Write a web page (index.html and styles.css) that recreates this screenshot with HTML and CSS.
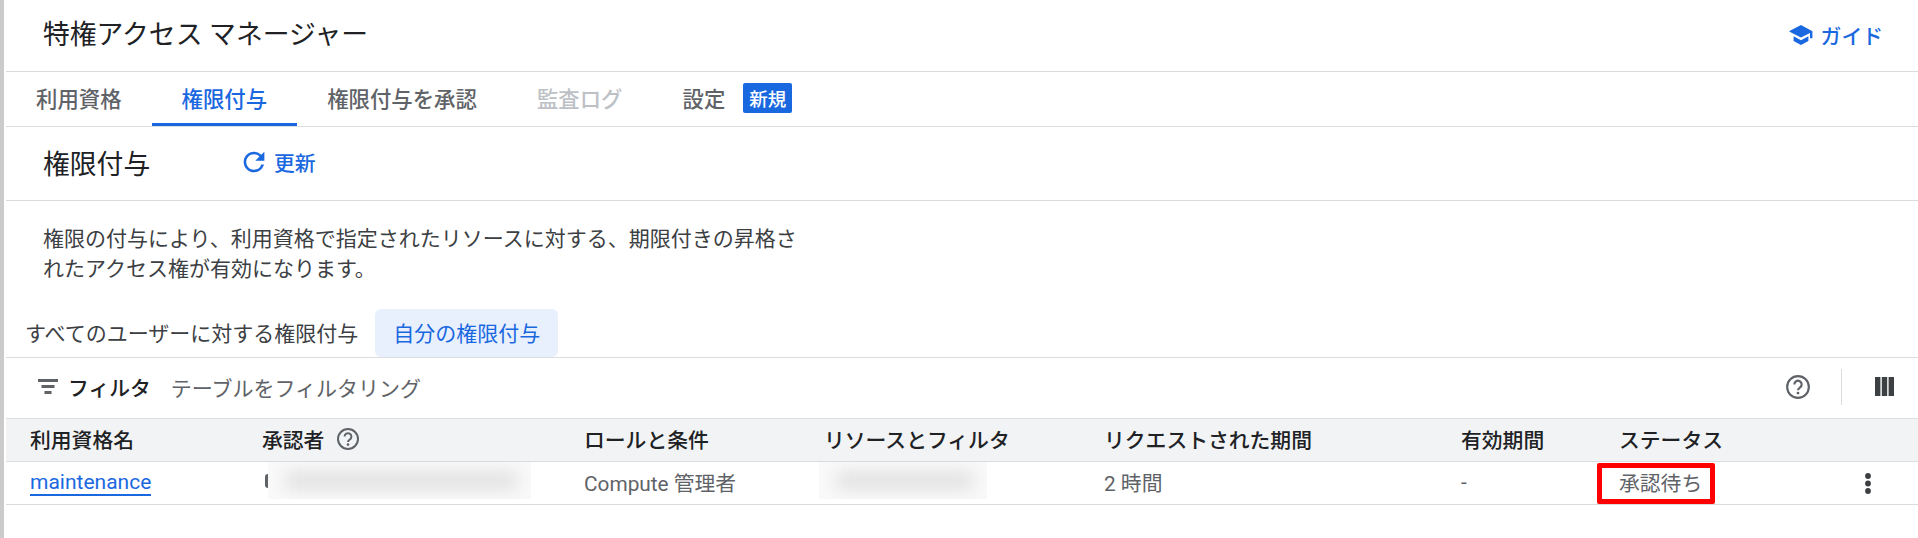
FILE: index.html
```html
<!DOCTYPE html>
<html lang="ja">
<head>
<meta charset="utf-8">
<title>特権アクセス マネージャー</title>
<link rel="stylesheet" href="styles.css">
</head>
<body>
<div class="page">
  <header class="topbar">
    <h1 class="app-title">特権アクセス マネージャー</h1>
    <a class="guide">
      <svg class="guide-icon" viewBox="0 0 24 20"><path fill="#1a68e0" d="M12 0 0 6.3l3 1.6v0L12 12.6l9-4.7v5.4h2.4V6.3z"/><path fill="#1a68e0" d="M4.6 11.3v4.6L12 20l7.4-4.1v-4.6L12 15.2z"/></svg>
      <span>ガイド</span>
    </a>
  </header>
  <nav class="tabs">
    <a class="tab">利用資格</a>
    <a class="tab active">権限付与</a>
    <a class="tab">権限付与を承認</a>
    <a class="tab disabled">監査ログ</a>
    <a class="tab">設定<span class="badge">新規</span></a>
  </nav>
  <section class="section-head">
    <h2 class="section-title">権限付与</h2>
    <a class="refresh">
      <svg class="refresh-icon" viewBox="3.5 3.5 17 17"><path fill="#1a68e0" d="M17.65 6.35A7.958 7.958 0 0 0 12 4c-4.42 0-7.99 3.58-7.99 8s3.57 8 7.99 8c3.73 0 6.84-2.55 7.73-6h-2.08A5.99 5.99 0 0 1 12 18c-3.31 0-6-2.69-6-6s2.69-6 6-6c1.66 0 3.14.69 4.22 1.78L13 11h7V4l-2.35 2.35z"/></svg>
      <span>更新</span>
    </a>
  </section>
  <p class="desc">権限の付与により、利用資格で指定されたリソースに対する、期限付きの昇格されたアクセス権が有効になります。</p>
  <div class="subtabs">
    <a class="subtab">すべてのユーザーに対する権限付与</a>
    <a class="subtab selected">自分の権限付与</a>
  </div>
  <div class="filterbar">
    <svg class="filter-icon" viewBox="0 0 20 15"><path fill="#5f6368" d="M0 0h20v3H0zM3.5 6h13v3h-13zM6.5 12h7v3h-7z"/></svg>
    <span class="filter-label">フィルタ</span>
    <span class="filter-hint">テーブルをフィルタリング</span>
    <span class="spacer"></span>
    <svg class="help-lg" viewBox="0 0 24 24"><circle cx="12" cy="12" r="10" fill="none" stroke="#5f6368" stroke-width="2"/><path fill="none" stroke="#5f6368" stroke-width="2" d="M8.6 9.6a3.4 3.4 0 1 1 5.2 2.9c-1.2.8-1.8 1.4-1.8 2.6"/><circle cx="12" cy="17.6" r="1.3" fill="#5f6368"/></svg>
    <span class="divider"></span>
    <svg class="cols-icon" viewBox="0 0 19 19"><path fill="#3c4043" d="M0 0h5.4v19H0zM6.8 0h5.4v19H6.8zM13.6 0H19v19h-5.4z"/></svg>
  </div>
  <div class="grid-row head">
    <div>利用資格名</div>
    <div class="with-help">承認者
      <svg class="help-sm" viewBox="0 0 24 24"><circle cx="12" cy="12" r="10" fill="none" stroke="#5f6368" stroke-width="2"/><path fill="none" stroke="#5f6368" stroke-width="2" d="M8.6 9.6a3.4 3.4 0 1 1 5.2 2.9c-1.2.8-1.8 1.4-1.8 2.6"/><circle cx="12" cy="17.6" r="1.3" fill="#5f6368"/></svg>
    </div>
    <div>ロールと条件</div>
    <div>リソースとフィルタ</div>
    <div>リクエストされた期間</div>
    <div>有効期間</div>
    <div>ステータス</div>
    <div></div>
  </div>
  <div class="grid-row body">
    <div><a class="link">maintenance</a></div>
    <div class="blur-cell"><span class="paren"></span><span class="blur wide"><i></i></span></div>
    <div>Compute 管理者</div>
    <div class="blur-cell"><span class="blur narrow"><i></i></span></div>
    <div>2 時間</div>
    <div>-</div>
    <div class="status-cell"><span class="status">承認待ち</span></div>
    <div class="kebab-cell">
      <svg class="kebab" viewBox="0 0 6 21"><circle cx="3" cy="3" r="2.9" fill="#3c4043"/><circle cx="3" cy="10.5" r="2.9" fill="#3c4043"/><circle cx="3" cy="18" r="2.9" fill="#3c4043"/></svg>
    </div>
  </div>
</div>
</body>
</html>
```
FILE: styles.css
```css
*, *::before, *::after { box-sizing: border-box; }
html, body { margin: 0; padding: 0; background: #fff; }
body {
  width: 1918px;
  height: 538px;
  overflow: hidden;
  font-family: Roboto, "Noto Sans CJK JP", sans-serif;
  color: #3c4043;
  border-left: 4px solid #cbcbcb;
}
.page { margin-left: 2px; }
a { text-decoration: none; }

.topbar {
  height: 72px;
  border-bottom: 1px solid #dadce0;
  display: flex;
  align-items: center;
  justify-content: space-between;
  padding: 0 35px 2px 37px;
}
.app-title { margin: 0; font-size: 26.8px; font-weight: 400; color: #202124; line-height: 34px; }
.guide { display: flex; align-items: center; gap: 8px; color: #1a68e0; font-size: 20.8px; font-weight: 500; }
.guide-icon { width: 24px; height: 20px; }

.tabs { height: 55px; border-bottom: 1px solid #dadce0; display: flex; align-items: stretch; }
.tab {
  display: flex; align-items: center;
  padding: 0 30px;
  font-size: 21.4px;
  color: #5f6368;
  font-weight: 500;
  border-bottom: 3px solid transparent;
}
.tab.active { color: #1a68e0; border-bottom-color: #1a68e0; }
.tab.disabled { color: #bdc1c6; }
.badge {
  margin-left: 18px;
  width: 49px; height: 30px;
  background: #1a68e0; color: #fff;
  border-radius: 2px;
  font-size: 18.5px;
  font-weight: 500;
  display: flex; align-items: center; justify-content: center;
}

.section-head {
  height: 74px;
  border-bottom: 1px solid #dadce0;
  display: flex; align-items: center;
  padding: 0 0 3px 37px;
}
.section-title { margin: 0; font-size: 26.8px; font-weight: 400; color: #202124; width: 200px; }
.refresh { display: flex; align-items: center; gap: 9px; color: #1a68e0; font-size: 20.8px; font-weight: 500; }
.refresh-icon { width: 22px; height: 22px; }

.desc {
  margin: 0;
  padding: 23px 0 0 37px;
  width: 800px;
  font-size: 21px;
  line-height: 30px;
  color: #3c4043;
  height: 108px;
}

.subtabs { display: flex; height: 49px; border-bottom: 1px solid #dadce0; padding-left: 19px; }
.subtab {
  display: flex; align-items: center;
  padding-bottom: 2px;
  font-size: 21px; color: #3c4043;
  white-space: nowrap;
}
.subtab.selected {
  margin-left: 17px;
  width: 183px; justify-content: center;
  background: #e8f0fe; color: #1a68e0;
  border-radius: 6px;
}

.filterbar { height: 60px; display: flex; align-items: center; padding: 0 24px 3px 32px; }
.filter-icon { width: 20px; height: 15px; margin-right: 10px; }
.filter-label { font-size: 20.8px; font-weight: 500; color: #202124; margin-right: 20px; }
.filter-hint { font-size: 21px; color: #5f6368; }
.spacer { flex: 1; }
.help-lg { width: 26px; height: 26px; }
.divider { width: 1px; height: 36px; background: #dadce0; margin: 0 33px 0 30px; }
.cols-icon { width: 19px; height: 19px; }

.grid-row {
  display: grid;
  grid-template-columns: 232px 322px 240px 280px 357px 158px 1fr 80px;
  padding-left: 24px;
  align-items: center;
  font-size: 20.8px;
}
.grid-row.head {
  height: 44px;
  background: #f1f3f4;
  border-top: 1px solid #dadce0;
  border-bottom: 1px solid #dadce0;
  padding-bottom: 3px;
  color: #202124;
  font-weight: 500;
}
.grid-row.body {
  height: 43px;
  border-bottom: 1px solid #dadce0;
  color: #5f6368;
}
.grid-row.body > div:not(.blur-cell):not(.status-cell):not(.kebab-cell) { padding-bottom: 3px; }
.with-help { display: flex; align-items: center; gap: 12px; }
.help-sm { width: 24px; height: 24px; }
.link { color: #1a68e0; border-bottom: 2px solid #1a68e0; font-size: 21px; }

.blur-cell { display: flex; align-items: flex-start; height: 42px; }
.paren {
  width: 3px; height: 14px;
  margin: 12px 0 0 3px;
  background: #5f6368;
  border-radius: 3px 0 0 3px;
}
.blur { display: block; overflow: hidden; height: 37px; position: relative; background: #f9f9f9; }
.blur.wide { width: 263px; }
.blur.narrow { width: 168px; margin-left: -5px; }
.blur i {
  position: absolute; display: block;
  left: 18px; right: 14px; top: 9px; bottom: 9px;
  background: #e2e2e2;
  filter: blur(8px);
}

.status-cell { position: relative; height: 42px; display: flex; align-items: center; padding-bottom: 2px; }
.status { color: #5f6368; }
.status::after {
  content: "";
  position: absolute;
  left: -22px; top: 1px;
  width: 118px; height: 41px;
  border: 5px solid #f00;
  border-radius: 2px;
}
.kebab-cell { display: flex; justify-content: center; }
.kebab { width: 6px; height: 21px; margin-right: 20px; }
```
